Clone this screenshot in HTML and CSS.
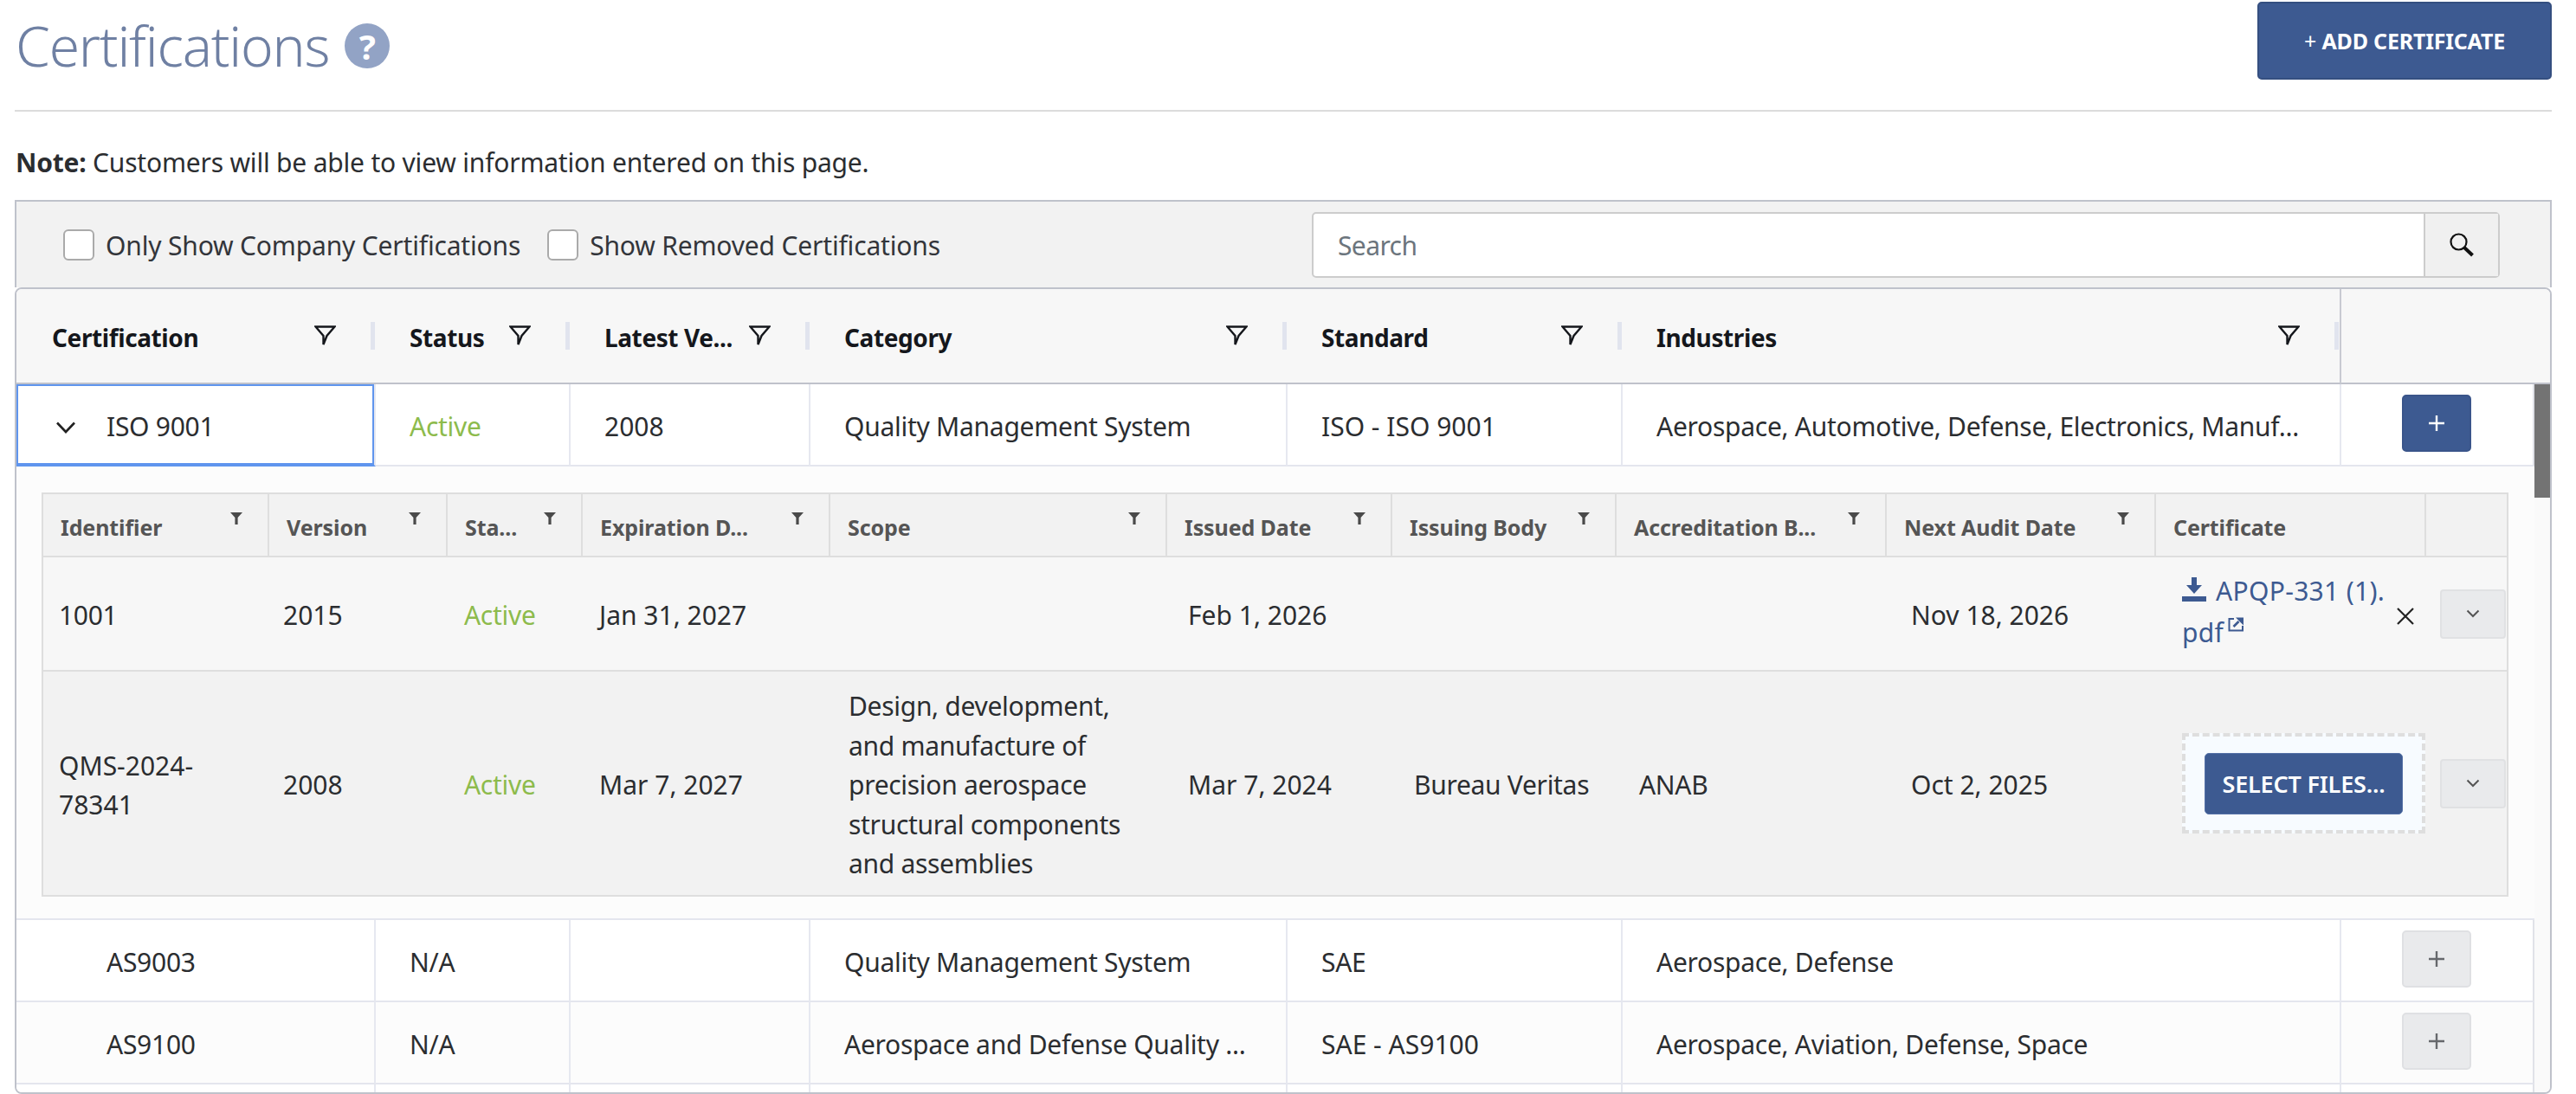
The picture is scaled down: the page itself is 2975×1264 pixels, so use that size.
FILE: index.html
```html
<!DOCTYPE html>
<html lang="en">
<head>
<meta charset="utf-8">
<title>Certifications</title>
<link rel="stylesheet" href="styles.css">
</head>
<body>
<svg class="defs" width="0" height="0" aria-hidden="true">
  <symbol id="funnel" viewBox="0 0 25 24"><path d="M1.5 1.5H23.5L14.5 12L10.5 22V12Z" fill="none" stroke="#15171c" stroke-width="2.4" stroke-linejoin="miter"/></symbol>
  <symbol id="minifunnel" viewBox="0 0 14 14"><path d="M0 0H14L8.6 6V14H5.4V6Z" fill="#4a4a4a"/></symbol>
  <symbol id="chev" viewBox="0 0 16 10"><path d="M1.5 1.5L8 8L14.5 1.5" fill="none" stroke="#555" stroke-width="2"/></symbol>
  <symbol id="plus" viewBox="0 0 20 20"><path d="M10 1V19M1 10H19" stroke="currentColor" stroke-width="2.4"/></symbol>
</svg>
<header class="page-head">
  <div class="title-wrap">
    <h1 class="title">Certifications</h1>
    <span class="help">?</span>
  </div>
  <button class="add-btn"><span class="add-plus">+</span> ADD CERTIFICATE</button>
</header>
<p class="note"><b>Note:</b> Customers will be able to view information entered on this page.</p>
<section class="panel">
  <div class="toolbar">
    <label class="check"><span class="box"></span>Only Show Company Certifications</label>
    <label class="check"><span class="box"></span>Show Removed Certifications</label>
    <div class="search">
      <span class="search-input">Search</span>
      <span class="search-btn">
        <svg width="28" height="28" viewBox="0 0 28 28"><circle cx="10.5" cy="10.5" r="9" fill="none" stroke="#111" stroke-width="2.2"/><path d="M17 17L26.5 26" stroke="#111" stroke-width="4"/></svg>
      </span>
    </div>
  </div>
  <div class="grid">
    <table class="main main-head">
      <colgroup><col class="c1"><col class="c2"><col class="c3"><col class="c4"><col class="c5"><col class="c6"><col></colgroup>
      <thead>
        <tr>
          <th class="first"><div class="hc"><span class="ht">Certification</span><svg class="fi"><use href="#funnel"/></svg><i class="hd"></i></div></th>
          <th><div class="hc"><span class="ht">Status</span><svg class="fi"><use href="#funnel"/></svg><i class="hd"></i></div></th>
          <th><div class="hc"><span class="ht">Latest Ve...</span><svg class="fi"><use href="#funnel"/></svg><i class="hd"></i></div></th>
          <th><div class="hc"><span class="ht">Category</span><svg class="fi"><use href="#funnel"/></svg><i class="hd"></i></div></th>
          <th><div class="hc"><span class="ht">Standard</span><svg class="fi"><use href="#funnel"/></svg><i class="hd"></i></div></th>
          <th class="sixth"><div class="hc"><span class="ht">Industries</span><svg class="fi"><use href="#funnel"/></svg><i class="hd"></i></div></th>
          <th class="last"></th>
        </tr>
      </thead>
    </table>
    <div class="body-wrap">
      <table class="main main-body">
        <colgroup><col class="c1"><col class="c2"><col class="c3"><col class="c4"><col class="c5"><col class="c6"><col></colgroup>
        <tbody>
          <tr class="row">
            <td class="name focus"><svg class="toggle" viewBox="0 0 24 16"><path d="M2 2.5L12 13L22 2.5" fill="none" stroke="#222" stroke-width="2.6"/></svg>ISO 9001</td>
            <td class="active">Active</td>
            <td class="num">2008</td>
            <td>Quality Management System</td>
            <td class="num">ISO - ISO 9001</td>
            <td>Aerospace, Automotive, Defense, Electronics, Manuf...</td>
            <td class="act"><button class="pbtn on"><svg width="20" height="20"><use href="#plus"/></svg></button></td>
          </tr>
          <tr class="detail">
            <td colspan="7">
              <div class="nest">
                <table class="sub">
                  <colgroup><col class="s1"><col class="s2"><col class="s3"><col class="s4"><col class="s5"><col class="s6"><col class="s7"><col class="s8"><col class="s9"><col class="s10"><col></colgroup>
                  <thead>
                    <tr>
                      <th><div class="shc"><span>Identifier</span><svg class="mf"><use href="#minifunnel"/></svg></div></th>
                      <th><div class="shc"><span>Version</span><svg class="mf"><use href="#minifunnel"/></svg></div></th>
                      <th><div class="shc"><span>Sta...</span><svg class="mf"><use href="#minifunnel"/></svg></div></th>
                      <th><div class="shc"><span>Expiration D...</span><svg class="mf"><use href="#minifunnel"/></svg></div></th>
                      <th><div class="shc"><span>Scope</span><svg class="mf"><use href="#minifunnel"/></svg></div></th>
                      <th><div class="shc"><span>Issued Date</span><svg class="mf"><use href="#minifunnel"/></svg></div></th>
                      <th><div class="shc"><span>Issuing Body</span><svg class="mf"><use href="#minifunnel"/></svg></div></th>
                      <th><div class="shc"><span>Accreditation B...</span><svg class="mf"><use href="#minifunnel"/></svg></div></th>
                      <th><div class="shc"><span>Next Audit Date</span><svg class="mf"><use href="#minifunnel"/></svg></div></th>
                      <th><div class="shc"><span>Certificate</span></div></th>
                      <th></th>
                    </tr>
                  </thead>
                  <tbody>
                    <tr class="r1">
                      <td>1001</td>
                      <td class="num">2015</td>
                      <td class="active">Active</td>
                      <td class="num">Jan 31, 2027</td>
                      <td></td>
                      <td class="num">Feb 1, 2026</td>
                      <td></td>
                      <td></td>
                      <td class="num">Nov 18, 2026</td>
                      <td>
                        <div class="file">
                          <a class="file-link"><svg class="dl" viewBox="0 0 28 28"><path d="M11 0H17V9H23L14 19L5 9H11Z M0 22H28V28H0Z" fill="#3d5a91"/></svg> APQP-331 (1).<wbr>pdf<svg class="ext" viewBox="0 0 18 17"><path d="M7 2H1.5V15.5H17V10" fill="none" stroke="#3d5a91" stroke-width="2"/><path d="M6.5 11L12.5 5" stroke="#3d5a91" stroke-width="2.6"/><path d="M9 0.5H18V9.5Z" fill="#3d5a91"/></svg></a>
                          <svg class="rm" viewBox="0 0 20 20"><path d="M1 1L19 19M19 1L1 19" stroke="#222" stroke-width="2.2"/></svg>
                        </div>
                      </td>
                      <td class="sact"><button class="cbtn"><svg width="16" height="10"><use href="#chev"/></svg></button></td>
                    </tr>
                    <tr class="r2">
                      <td class="num">QMS-2024-<br>78341</td>
                      <td class="num">2008</td>
                      <td class="active">Active</td>
                      <td class="num">Mar 7, 2027</td>
                      <td>Design, development, and manufacture of precision aerospace structural components and assemblies</td>
                      <td class="num">Mar 7, 2024</td>
                      <td>Bureau Veritas</td>
                      <td>ANAB</td>
                      <td class="num">Oct 2, 2025</td>
                      <td>
                        <div class="drop"><button class="sel">SELECT FILES...</button></div>
                      </td>
                      <td class="sact"><button class="cbtn"><svg width="16" height="10"><use href="#chev"/></svg></button></td>
                    </tr>
                  </tbody>
                </table>
              </div>
            </td>
          </tr>
          <tr class="row">
            <td class="name">AS9003</td>
            <td>N/A</td>
            <td></td>
            <td>Quality Management System</td>
            <td>SAE</td>
            <td>Aerospace, Defense</td>
            <td class="act"><button class="pbtn"><svg width="20" height="20"><use href="#plus"/></svg></button></td>
          </tr>
          <tr class="row alt">
            <td class="name">AS9100</td>
            <td>N/A</td>
            <td></td>
            <td>Aerospace and Defense Quality ...</td>
            <td class="num">SAE - AS9100</td>
            <td>Aerospace, Aviation, Defense, Space</td>
            <td class="act"><button class="pbtn"><svg width="20" height="20"><use href="#plus"/></svg></button></td>
          </tr>
          <tr class="row"><td class="name"></td><td></td><td></td><td></td><td></td><td></td><td class="act"></td></tr>
        </tbody>
      </table>
      <div class="scroll"><div class="thumb"></div></div>
    </div>
  </div>
</section>
</body>
</html>
```
FILE: styles.css
```css
* { box-sizing: border-box; }
html, body { margin: 0; height: 1264px; overflow: hidden; }
body {
  padding: 0 28px 0 17px;
  background: #fff;
  color: #2b2d30;
  font-family: "Noto Sans", "Open Sans", sans-serif;
  font-size: 30px;
  letter-spacing: -0.27px;
}
.defs { position: absolute; }
button { font-family: inherit; cursor: pointer; }

.page-head {
  display: flex;
  justify-content: space-between;
  align-items: flex-start;
  height: 129px;
  padding-top: 2px;
  border-bottom: 2px solid #dcdcdc;
}
.title-wrap { display: flex; align-items: center; gap: 18px; height: 102px; padding-left: 1px; }
.title { margin: 0; font-size: 64px; font-weight: 300; color: #6f80a3; letter-spacing: -1.2px; line-height: 102px; }
.help {
  width: 52px; height: 52px; border-radius: 50%;
  background: #92a3c5; color: #fff;
  display: flex; align-items: center; justify-content: center;
  font-weight: 700; font-size: 40px; letter-spacing: 0;
}
.add-btn {
  width: 340px; height: 90px;
  background: #3d5a91; border: 2px solid #354f80; border-radius: 5px;
  color: #fff; font-weight: 700; font-size: 25px; letter-spacing: -0.2px;
}
.add-plus { font-weight: 400; }

.note { margin: 0; height: 102px; padding-top: 38px; padding-left: 1px; line-height: 41px; letter-spacing: -0.2px; }
.note b { font-weight: 700; }

.panel { height: 1033px; }
.toolbar {
  height: 101px;
  display: flex;
  align-items: center;
  background: #f2f2f2;
  border: 2px solid #bfc2cb;
  border-bottom: 0;
  padding-left: 54px;
  padding-right: 58px;
}
.check { display: flex; align-items: center; gap: 13px; margin-right: 31px; padding-top: 1px; color: #33353a; white-space: nowrap; letter-spacing: -0.17px; }
.box { width: 36px; height: 36px; background: #fff; border: 2px solid #aaa; border-radius: 6px; flex: none; }
.search {
  margin-left: auto;
  width: 1372px; height: 76px;
  display: flex;
  background: #fff;
  border: 2px solid #ccc;
  border-radius: 5px;
}
.search-input { flex: 1; display: flex; align-items: center; padding-left: 28px; padding-top: 1px; color: #6c757d; letter-spacing: -0.6px; }
.search-btn {
  width: 86px;
  display: flex; align-items: center; justify-content: center;
  background: #f0f0f0;
  border-left: 2px solid #ccc;
}

.grid {
  height: 932px;
  border: 2px solid #bfc2cb;
  border-radius: 8px;
  overflow: hidden;
  background: #fcfcfc;
}
table { border-collapse: separate; border-spacing: 0; table-layout: fixed; width: 100%; }
.c1 { width: 415px; } .c2 { width: 225px; } .c3 { width: 277px; }
.c4 { width: 551px; } .c5 { width: 387px; } .c6 { width: 830px; }

.main-head th {
  height: 110px;
  background: #f7f7f7;
  border-bottom: 2px solid #bfc2cb;
  padding: 0;
  text-align: left;
}
.main-head .sixth { border-right: 2px solid #c8cad2; }
.hc { display: flex; align-items: center; padding-left: 39px; }
.first .hc { padding-left: 41px; }
.ht { flex: 1; font-size: 28px; font-weight: 700; color: #15171c; white-space: nowrap; letter-spacing: -0.4px; padding-top: 3px; }
.fi { width: 25px; height: 24px; margin-right: 40px; flex: none; }
.hd { width: 5px; height: 32px; background: #e1e4ee; flex: none; margin-right: 1px; }

.body-wrap { display: flex; height: 820px; overflow: hidden; align-items: flex-start; }
.main-body { flex: 1; background: #fff; width: 2908px; }
.scroll { width: 18px; height: 820px; background: #fafafa; flex: none; }
.thumb { height: 131px; background: #737373; }

.row td {
  height: 95px;
  padding: 3px 8px 0 39px;
  border-bottom: 2px solid #e4e6ee;
  border-right: 2px solid #e6e8f0;
  white-space: nowrap;
  overflow: hidden;
}
.row td.num { letter-spacing: 0; }
.row.alt td { background: #fcfcfc; }
.row .name { padding-left: 104px; position: relative; }
.row .focus { box-shadow: inset 0 0 0 2px #5f95ee; padding-left: 45px; border-bottom-color: #5f95ee; }
.toggle { width: 24px; height: 16px; margin-right: 35px; vertical-align: 2px; }
.row .act { padding: 0 0 4px 70px; border-right-color: #e0e2e8; }
.active { color: #8dbb4c; }
.pbtn {
  width: 80px; height: 66px;
  display: flex; align-items: center; justify-content: center;
  background: #e9eaec; color: #66686c;
  border: 2px solid #dfe0e3; border-radius: 5px; padding: 0;
}
.pbtn.on { background: #3d5a91; border-color: #3a558a; color: #fff; }

.detail > td {
  padding: 30px 30px 25px 29px;
  background: #fcfcfc;
  border-bottom: 2px solid #e4e6ee;
}
.nest { border: 2px solid #dedede; }
.s1 { width: 261px; } .s2 { width: 206px; } .s3 { width: 156px; } .s4 { width: 286px; }
.s5 { width: 389px; } .s6 { width: 260px; } .s7 { width: 259px; } .s8 { width: 312px; }
.s9 { width: 311px; } .s10 { width: 312px; }

.sub th {
  height: 73px;
  background: #f2f2f2;
  border-bottom: 2px solid #dedede;
  border-right: 2px solid #dedede;
  padding: 0 29px 0 20px;
  text-align: left;
}
.sub th:last-child { border-right: 0; }
.shc { display: flex; justify-content: space-between; align-items: flex-start; color: #555; font-size: 25px; font-weight: 700; letter-spacing: -0.1px; white-space: nowrap; }
.shc span { padding-top: 5px; }
.mf { width: 14px; height: 14px; margin-top: 5px; flex: none; }
.sub td { padding: 4px 8px 0 18px; line-height: 45.4px; vertical-align: middle; letter-spacing: -0.3px; }
.sub td.num { letter-spacing: 0; }
.r1 td { height: 132px; background: #f7f7f7; border-bottom: 2px solid #dedede; }
.r2 td { height: 258px; background: #f2f2f2; }
.sub td:nth-child(2) { padding-left: 16px; }
.sub td:nth-child(3), .sub td:nth-child(4) { padding-left: 19px; }
.sub td:nth-child(5) { padding-left: 21px; padding-right: 16px; }
.sub td:nth-child(6) { padding-left: 24px; }
.sub td:nth-child(7) { padding-left: 25px; }
.sub td:nth-child(8) { padding-left: 26px; }
.sub td:nth-child(9) { padding-left: 28px; }
.sub td:nth-child(10) { padding: 0 1px 0 30px; }
.sub td.sact { padding: 0 0 0 16px; }

.file { display: flex; align-items: center; justify-content: space-between; padding-right: 13px; }
.file-link { width: 240px; margin-bottom: 4px; color: #3d5a91; line-height: 48px; letter-spacing: 0.3px; }
.dl { width: 28px; height: 28px; margin-right: 3px; vertical-align: -1px; }
.ext { width: 18px; height: 17px; margin-left: 5px; vertical-align: 12px; }
.rm { width: 20px; height: 20px; flex: none; margin-top: 6px; }
.cbtn {
  width: 76px; height: 57px;
  display: flex; align-items: center; justify-content: center;
  background: #e9eaec;
  border: 2px solid #e0e1e3; border-radius: 4px; padding: 0;
}
.drop {
  width: 281px; height: 116px;
  display: flex; align-items: center; justify-content: center;
  background: #f7fbff;
  border: 4px dashed #dedede;
}
.sel {
  width: 229px; height: 71px;
  background: #3d5a91; border: 1px solid #5470a6; border-radius: 5px; padding: 0;
  color: #fff; font-size: 27px; font-weight: 600; letter-spacing: -0.2px;
}
```
